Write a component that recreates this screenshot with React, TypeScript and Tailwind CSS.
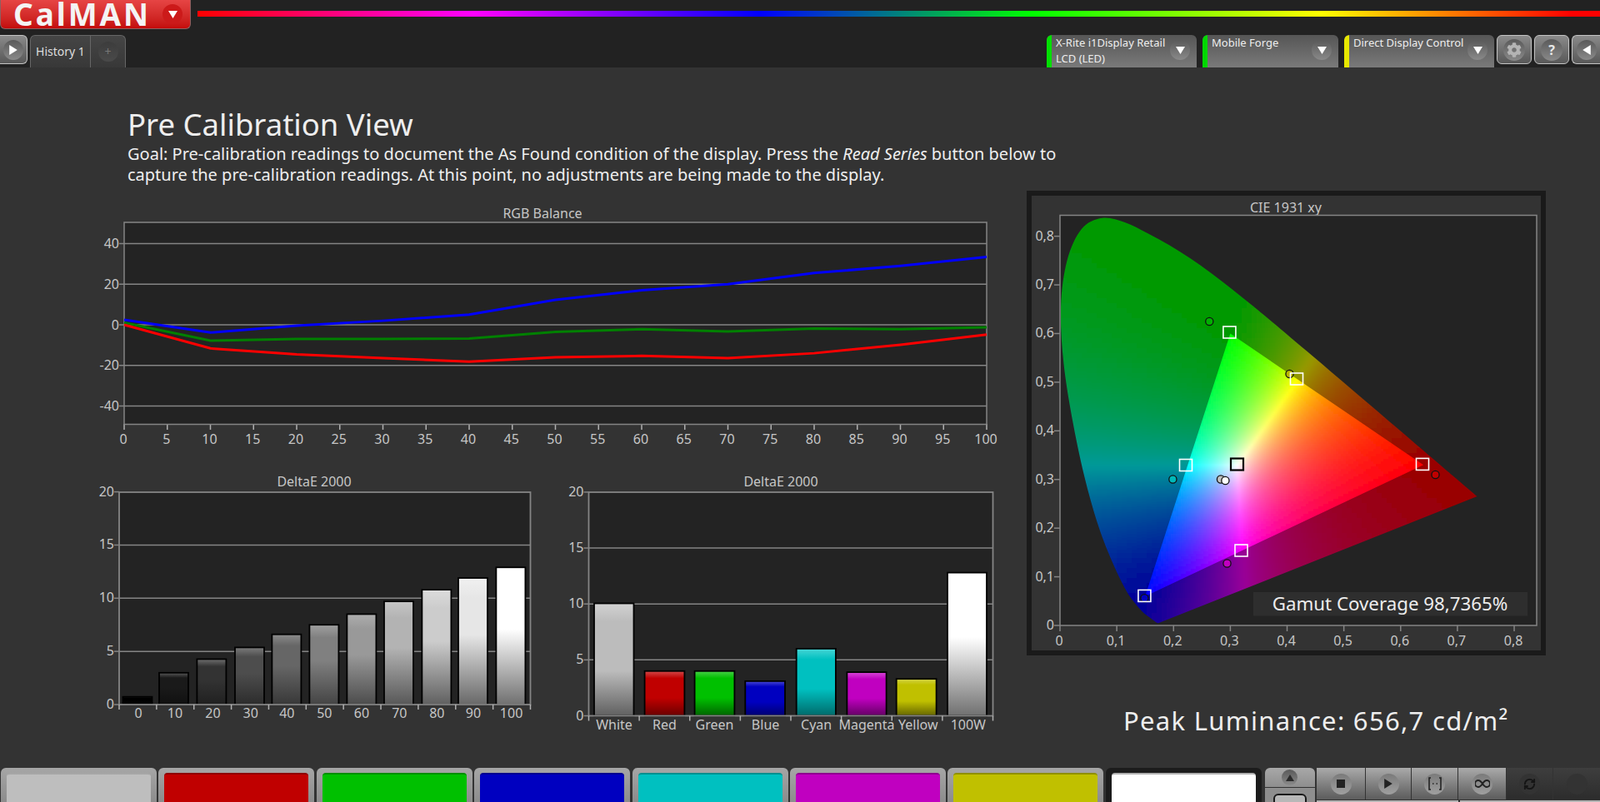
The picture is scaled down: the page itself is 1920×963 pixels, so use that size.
import { useMemo } from "react"
import { FaCog } from "react-icons/fa"
import { RefreshCw } from "lucide-react"

const LABEL = "#c6c6c6"
const AXIS = "#858585"
const PLOT = "#232323"

// spectral locus, CIE 1931 (nudged a little to sit on the reference outline)
const LOCUS = [
  [0.1741, 0.005], [0.1733, 0.0048], [0.1714, 0.0051], [0.1689, 0.0069], [0.1644, 0.0109], [0.1566, 0.0177],
  [0.144, 0.0297], [0.1241, 0.0578], [0.1096, 0.0868], [0.0913, 0.1327], [0.0687, 0.2007], [0.0454, 0.295],
  [0.0235, 0.4127], [0.0065, 0.5384], [0.0015, 0.6548], [0.0125, 0.7502], [0.038, 0.815], [0.0743, 0.8375],
  [0.1142, 0.8285], [0.1547, 0.8059], [0.1929, 0.7816], [0.2296, 0.7543], [0.2658, 0.7243], [0.3016, 0.6923],
  [0.3373, 0.6589], [0.3731, 0.6245], [0.4441, 0.5547], [0.5125, 0.4866], [0.5752, 0.4242], [0.627, 0.3725],
  [0.6658, 0.334], [0.6915, 0.3083], [0.719, 0.2809], [0.7347, 0.2653],
]

const cx = (x: number) => 1272 + 681.3 * x
const cy = (y: number) => 751 - 584.2 * y

// catmull-rom through the locus points, closed by the purple line
function locusPath() {
  const pts = LOCUS.map(([x, y]) => [cx(x), cy(y)])
  let d = `M${pts[0][0]} ${pts[0][1]}`
  for (let i = 0; i < pts.length - 1; i++) {
    const p0 = pts[Math.max(i - 1, 0)]
    const p1 = pts[i]
    const p2 = pts[i + 1]
    const p3 = pts[Math.min(i + 2, pts.length - 1)]
    d += `C${p1[0] + (p2[0] - p0[0]) / 6} ${p1[1] + (p2[1] - p0[1]) / 6} ${p2[0] - (p3[0] - p1[0]) / 6} ${p2[1] - (p3[1] - p1[1]) / 6} ${p2[0]} ${p2[1]}`
  }
  return `${d}Z`
}

// xy to a display colour, normalised to full brightness and scaled by k
function xyColor(x: number, y: number, k: number) {
  const yy = Math.max(y, 0.002)
  const X = x / yy
  const Z = (1 - x - yy) / yy
  const r = Math.max(0, 3.2406 * X - 1.5372 - 0.4986 * Z)
  const g = Math.max(0, -0.9689 * X + 1.8758 + 0.0415 * Z)
  const b = Math.max(0, 0.0557 * X - 0.204 + 1.057 * Z)
  const m = Math.max(r, g, b, 0.001)
  return `rgb(${Math.round((r / m) * k)},${Math.round((g / m) * k)},${Math.round((b / m) * k)})`
}

function cells(x0: number, x1: number, y0: number, y1: number, step: number, k: number, keep: (px: number, py: number) => boolean) {
  const out = []
  for (let px = x0; px < x1; px += step) {
    for (let py = y0; py < y1; py += step) {
      if (!keep(px, py)) continue
      const x = (px + step / 2 - 1272) / 681.3
      const y = (751 - py - step / 2) / 584.2
      out.push(<rect key={`${px}-${py}`} x={px} y={py} width={step + 0.5} height={step + 0.5} fill={xyColor(x, y, k)} />)
    }
  }
  return out
}

function Ticks({ lines }: { lines: [number, number, number, number][] }) {
  return (
    <>
      {lines.map(([a, b, c, d]) => (
        <line key={`${a}-${b}-${c}-${d}`} x1={a} y1={b} x2={c} y2={d} stroke={AXIS} strokeWidth={1.5} />
      ))}
    </>
  )
}

function RgbChart() {
  const ys = (v: number) => 390 - 2.4375 * v
  const xs = (v: number) => 149 + 10.35 * v
  const steps = [0, 10, 20, 30, 40, 50, 60, 70, 80, 90, 100]
  const path = (vals: number[]) => vals.map((v, i) => `${xs(steps[i])},${ys(v)}`).join(" ")
  const red = [0, -11.6, -14.6, -16.4, -18.2, -16, -15.3, -16.4, -14, -9.8, -4.8]
  const green = [1, -7.8, -7, -7, -6.8, -3.5, -2.2, -3.3, -1.8, -2.2, -1.2]
  const blue = [2.5, -3.8, -0.4, 2, 5, 12.3, 17, 20, 25.5, 29, 33.4]
  const xTicks = Array.from({ length: 21 }, (_, i) => i * 5)
  return (
    <svg viewBox="100 248 1110 292" width={1110} height={292} className="block ml-[100px]">
      <text x={651} y={262} textAnchor="middle" fontSize={16} fill={LABEL}>RGB Balance</text>
      <rect x={149} y={267} width={1035} height={242.5} fill={PLOT} />
      {[40, 20, 0, -20, -40].map(v => (
        <g key={v}>
          <line x1={143} x2={1184} y1={ys(v)} y2={ys(v)} stroke={AXIS} strokeWidth={1.5} />
          <text x={143} y={ys(v) + 5.5} textAnchor="end" fontSize={16} fill={LABEL}>{v}</text>
        </g>
      ))}
      {xTicks.map(v => (
        <g key={v}>
          <line x1={xs(v)} x2={xs(v)} y1={509} y2={516} stroke="#b0b0b0" strokeWidth={1.5} />
          <text x={xs(v) - 1} y={532.5} textAnchor="middle" fontSize={16} fill={LABEL}>{v}</text>
        </g>
      ))}
      <rect x={149} y={267} width={1035} height={242.5} fill="none" stroke={AXIS} strokeWidth={1.5} />
      <polyline points={path(green)} fill="none" stroke="#008000" strokeWidth={3} />
      <polyline points={path(blue)} fill="none" stroke="#0000ff" strokeWidth={3} />
      <polyline points={path(red)} fill="none" stroke="#ff0000" strokeWidth={3} />
    </svg>
  )
}

interface Bar {
  label: string
  left: number
  width: number
  value: number
  top: string
  base: string
  low: string
  mid?: number
  labelX: number
}

function BarChart({ id, x0, x1, left, right, bottom, unit, slots, labelY, titleX, bars }: {
  id: string
  x0: number
  x1: number
  left: number
  right: number
  bottom: number
  unit: number
  slots: number
  labelY: number
  titleX: number
  bars: Bar[]
}) {
  const top = 591
  const slot = (right - left) / slots
  return (
    <svg viewBox={`${x0} 565 ${x1 - x0} 315`} width={x1 - x0} height={315} className="block">
      <defs>
        {bars.map((b, i) => (
          <linearGradient key={b.label} id={`${id}${i}`} x1="0" y1="0" x2="0" y2="1">
            <stop offset="0" stopColor={b.top} />
            <stop offset="0.16" stopColor={b.base} />
            <stop offset={b.mid ?? 0.6} stopColor={b.base} />
            <stop offset="1" stopColor={b.low} />
          </linearGradient>
        ))}
      </defs>
      <text x={titleX} y={583.5} textAnchor="middle" fontSize={16} fill={LABEL}>DeltaE 2000</text>
      <rect x={left} y={top} width={right - left} height={bottom - top} fill={PLOT} />
      {[15, 10, 5].map(v => (
        <line key={v} x1={left} x2={right} y1={bottom - v * unit} y2={bottom - v * unit} stroke={AXIS} strokeWidth={1.5} />
      ))}
      {[20, 15, 10, 5, 0].map(v => (
        <g key={v}>
          <line x1={left - 6} x2={left} y1={bottom - v * unit} y2={bottom - v * unit} stroke={AXIS} strokeWidth={1.5} />
          <text x={left - 6} y={bottom - v * unit + 5} textAnchor="end" fontSize={16} fill={LABEL}>{v}</text>
        </g>
      ))}
      {bars.map((b, i) => (
        <rect key={b.label} x={b.left} y={bottom - b.value * unit} width={b.width} height={b.value * unit} fill={`url(#${id}${i})`} stroke="#000" strokeWidth={1.8} />
      ))}
      <rect x={left} y={top} width={right - left} height={bottom - top} fill="none" stroke={AXIS} strokeWidth={1.8} />
      {Array.from({ length: slots + 1 }, (_, i) => (
        <line key={i} x1={left + i * slot} x2={left + i * slot} y1={bottom} y2={bottom + 6} stroke="#b0b0b0" strokeWidth={1.5} />
      ))}
      {bars.map(b => (
        <text key={b.label} x={b.labelX} y={labelY} textAnchor="middle" fontSize={16} fill={LABEL}>{b.label}</text>
      ))}
    </svg>
  )
}

const grayLevels = [
  ["0", 147.5, 0.73, "#2a2a2a", "#000000", "#050505", 166],
  ["10", 191, 2.99, "#585858", "#1a1a1a", "#101010", 210],
  ["20", 236.4, 4.27, "#707070", "#333333", "#202020", 255.4],
  ["30", 282, 5.37, "#7c7c7c", "#4d4d4d", "#2c2c2c", 300.7],
  ["40", 326.4, 6.6, "#8c8c8c", "#666666", "#383838", 344.3],
  ["50", 371.4, 7.5, "#a0a0a0", "#808080", "#444444", 389.3],
  ["60", 416.4, 8.5, "#adadad", "#999999", "#4c4c4c", 434],
  ["70", 461, 9.7, "#c6c6c6", "#b3b3b3", "#585858", 479.3],
  ["80", 506.4, 10.8, "#dcdcdc", "#cccccc", "#606060", 524.3],
  ["90", 550, 11.9, "#f0f0f0", "#e6e6e6", "#686868", 567.9],
  ["100", 595.4, 12.9, "#ffffff", "#ffffff", "#707070", 613.6],
] as const

function GrayChart() {
  const bars = grayLevels.map(([label, left, value, top, base, low, labelX]) => ({
    label, left, width: 35, value, top, base, low, mid: 0.45, labelX,
  }))
  return <BarChart id="gray" x0={100} x1={650} left={143} right={636.5} bottom={846} unit={12.77} slots={11} labelY={862} titleX={377} bars={bars} />
}

function ColorChart() {
  const bars: Bar[] = [
    { label: "White", left: 713, width: 47.5, value: 10.05, top: "#d2d2d2", base: "#bcbcbc", low: "#606060", labelX: 737 },
    { label: "Red", left: 773.6, width: 47.8, value: 4, top: "#d24a4a", base: "#c00000", low: "#6a0000", labelX: 797.5 },
    { label: "Green", left: 833.6, width: 47.8, value: 4, top: "#48d048", base: "#00c000", low: "#006400", labelX: 857.5 },
    { label: "Blue", left: 894.3, width: 47.7, value: 3.1, top: "#4848d2", base: "#0000c0", low: "#000070", labelX: 918.6 },
    { label: "Cyan", left: 955.7, width: 47.2, value: 6, top: "#48d6d6", base: "#00c0c0", low: "#006a6a", labelX: 979.6 },
    { label: "Magenta", left: 1016.4, width: 47.2, value: 3.9, top: "#d648d6", base: "#c000c0", low: "#640064", labelX: 1040 },
    { label: "Yellow", left: 1075.7, width: 47.9, value: 3.3, top: "#d6d648", base: "#c0c000", low: "#646400", labelX: 1101.8 },
    { label: "100W", left: 1137, width: 47, value: 12.8, top: "#ffffff", base: "#ffffff", low: "#707070", mid: 0.45, labelX: 1161.8 },
  ]
  return <BarChart id="color" x0={660} x1={1210} left={706.5} right={1191.5} bottom={859.5} unit={13.43} slots={8} labelY={876} titleX={937} bars={bars} />
}

const TARGETS = [
  { x: 1475.4, y: 399 }, { x: 1556, y: 455 }, { x: 1707, y: 557.4 }, { x: 1423, y: 558.5 }, { x: 1489.5, y: 661 }, { x: 1373.4, y: 715.4 },
]
const READINGS = [
  { x: 1451.3, y: 386, c: "#00b000" }, { x: 1547.5, y: 449, c: "#b8b800" }, { x: 1722.5, y: 570, c: "#c00000" },
  { x: 1407.4, y: 575.5, c: "#00b8b8" }, { x: 1373.4, y: 718.3, c: "#0000c0" }, { x: 1472.5, y: 676.5, c: "#c000c0" },
  { x: 1465, y: 575.5, c: "#c0c0c0" }, { x: 1470.4, y: 577, c: "#ffffff" },
]

function CieChart() {
  const gamut = [[0.64, 0.33], [0.3, 0.6], [0.15, 0.06]].map(([x, y]) => [cx(x), cy(y)])
  const gamutPts = gamut.map(p => p.join(",")).join(" ")

  const { outer, inner } = useMemo(() => {
    const side = (a: number[], b: number[], x: number, y: number) => (b[0] - a[0]) * (y - a[1]) - (b[1] - a[1]) * (x - a[0])
    const near = (x: number, y: number) => {
      const m = 2500
      return side(gamut[0], gamut[1], x, y) < m && side(gamut[1], gamut[2], x, y) < m && side(gamut[2], gamut[0], x, y) < m
    }
    return {
      outer: cells(1262, 1790, 256, 760, 6, 153, () => true),
      inner: cells(1366, 1716, 392, 724, 3, 255, near),
    }
  }, [])

  const vals = [0, 1, 2, 3, 4, 5, 6, 7, 8]
  return (
    <svg viewBox="1238 235 611 546" width={611} height={546} className="block">
      <defs>
        <clipPath id="locus"><path d={locusPath()} /></clipPath>
        <clipPath id="gamut"><polygon points={gamutPts} /></clipPath>
        <filter id="soft" x="-5%" y="-5%" width="110%" height="110%"><feGaussianBlur stdDeviation="3" /></filter>
        <filter id="softer" x="-5%" y="-5%" width="110%" height="110%"><feGaussianBlur stdDeviation="1.2" /></filter>
      </defs>
      <text x={1543} y={254.5} textAnchor="middle" fontSize={16} fill={LABEL}>CIE 1931 xy</text>
      <rect x={1272} y={258.5} width={572} height={492.5} fill={PLOT} />
      <g clipPath="url(#locus)"><g filter="url(#soft)">{outer}</g></g>
      <g clipPath="url(#gamut)"><g filter="url(#softer)">{inner}</g></g>
      <rect x={1272} y={258.5} width={572} height={492.5} fill="none" stroke={AXIS} strokeWidth={1.5} />
      <Ticks lines={vals.map(i => [1265, cy(i / 10), 1272, cy(i / 10)] as [number, number, number, number])} />
      <Ticks lines={vals.map(i => [cx(i / 10), 751, cx(i / 10), 758] as [number, number, number, number])} />
      {vals.map(i => (
        <g key={i}>
          <text x={1265} y={cy(i / 10) + 5} textAnchor="end" fontSize={16} fill={LABEL}>{i === 0 ? "0" : `0,${i}`}</text>
          <text x={cx(i / 10) - 1} y={774.5} textAnchor="middle" fontSize={16} fill={LABEL}>{i === 0 ? "0" : `0,${i}`}</text>
        </g>
      ))}
      {READINGS.map(r => (
        <circle key={`${r.x}`} cx={r.x} cy={r.y} r={4.6} fill={r.c} stroke="#111" strokeWidth={1.3} />
      ))}
      {TARGETS.map(t => (
        <rect key={t.x} x={t.x - 7.5} y={t.y - 7} width={15} height={14} fill="none" stroke="#fff" strokeWidth={1.6} />
      ))}
      <rect x={1477} y={550.5} width={15} height={14} fill="none" stroke="#000" strokeWidth={2.2} />
      <rect x={1504} y={711} width={329} height={28.5} fill="#2e2e2e" />
      <text x={1668} y={732.5} textAnchor="middle" fontSize={22.3} fill="#ececec">Gamut Coverage 98,7365%</text>
    </svg>
  )
}

function Orb({ size = 26, dark = false, children }: { size?: number; dark?: boolean; children?: React.ReactNode }) {
  return (
    <div
      className={`flex items-center justify-center rounded-full shrink-0 ${dark ? "bg-gradient-to-b from-[#3c3c3c] to-[#4a4a4a]" : "bg-gradient-to-b from-[#5a5a5a] to-[#8a8a8a]"}`}
      style={{ width: size, height: size }}
    >
      {children}
    </div>
  )
}

function Tri({ dir, size = 10, color = "#fff" }: { dir: "up" | "down" | "left" | "right"; size?: number; color?: string }) {
  const pts = { up: "0,9 5,1 10,9", down: "0,1 10,1 5,9", left: "9,0 9,10 1,5", right: "1,0 1,10 9,5" }[dir]
  return (
    <svg width={size} height={size} viewBox="0 0 10 10"><polygon points={pts} fill={color} /></svg>
  )
}

function Dropdown({ color, lines, className }: { color: string; lines: string[]; className: string }) {
  return (
    <div className={`relative flex h-[39px] rounded-t-md overflow-hidden bg-gradient-to-b from-[#565656] to-[#7a7a7a] pl-[11px] text-[13px] leading-[19px] text-[#eeeeee] ${className}`}>
      <div className="absolute left-0 top-0 bottom-0 w-[6px] rounded-tl-md" style={{ background: color }} />
      <div className="flex-1 whitespace-nowrap">
        {lines.map(l => <div key={l}>{l}</div>)}
      </div>
      <div className="mr-[8px] mt-[6px]">
        <Orb size={24}><Tri dir="down" size={11} /></Orb>
      </div>
    </div>
  )
}

function SquareBtn({ children, className }: { children: React.ReactNode; className: string }) {
  return (
    <div className={`flex items-center justify-center h-[35px] rounded-md border border-[#c4c4c4] bg-gradient-to-b from-[#8a8a8a] to-[#585858] ${className}`}>
      {children}
    </div>
  )
}

function Header() {
  return (
    <header className="h-[81px] bg-[#222222] shrink-0">
      <div className="flex h-[42px]">
        <div className="flex items-center justify-between w-[229px] h-[35px] pl-[15px] pr-[9px] rounded-b-md border border-t-0 border-[#8c6060] bg-gradient-to-b from-[#e64444] to-[#c40a0a]">
          <span className="-mt-[2px] font-['Liberation_Sans',sans-serif] font-bold text-[37px] leading-[31px] tracking-[2.9px] text-[#f4f4f4]">CalMAN</span>
          <div className="flex items-center justify-center w-[24px] h-[24px] rounded-full bg-[#cc1a1a]">
            <Tri dir="down" size={11} />
          </div>
        </div>
        <div className="flex-1 h-[7px] mt-[13px] ml-[8px] bg-[linear-gradient(to_right,#ff0000_0%,#ff00ff_19.7%,#0000ff_40.1%,#00ff00_59.5%,#ffff00_80.1%,#ff0000_98%)]" />
      </div>
      <div className="flex h-[39px]">
        <SquareBtn className="w-[33px] rounded-l-none border-l-0">
          <Orb size={24}><Tri dir="right" size={12} /></Orb>
        </SquareBtn>
        <div className="flex ml-[3px] w-[115px] rounded-t-md border border-b-0 border-[#666666] bg-gradient-to-b from-[#454545] to-[#383838] text-[14px]">
          <div className="flex items-center justify-center w-[72px] pb-[2px] text-[#dddddd] border-r border-[#666666]">History 1</div>
          <div className="flex flex-1 items-center justify-center">
            <Orb size={24} dark><span className="text-[14px] leading-none text-[#777777]">+</span></Orb>
          </div>
        </div>
        <Dropdown color="#00e000" lines={["X-Rite i1Display Retail", "LCD (LED)"]} className="ml-auto w-[180px]" />
        <Dropdown color="#00d800" lines={["Mobile Forge"]} className="ml-[7px] w-[163px]" />
        <Dropdown color="#e8e800" lines={["Direct Display Control"]} className="ml-[7px] w-[180px]" />
        <SquareBtn className="ml-[3px] w-[42px]"><Orb size={26}><FaCog size={18} color="#b4b4b4" /></Orb></SquareBtn>
        <SquareBtn className="ml-[3px] w-[42px]"><Orb size={26}><span className="font-['Liberation_Sans',sans-serif] font-bold text-[16px] text-[#e8e8e8]">?</span></Orb></SquareBtn>
        <SquareBtn className="ml-[3px] w-[34px] rounded-r-none border-r-0"><Orb size={24}><Tri dir="left" size={12} /></Orb></SquareBtn>
      </div>
    </header>
  )
}

function Swatch({ color, edge, selected }: { color: string; edge: string; selected?: boolean }) {
  return (
    <div className={`w-[187px] h-[41px] rounded-t-md px-[7px] pt-[6px] shrink-0 ${selected ? "bg-[#1c1c1c]" : "bg-gradient-to-b from-[#a6a6a6] to-[#8c8c8c]"}`}>
      <div className={`h-full rounded-t-[4px] border-t-2 ${color} ${edge}`} />
    </div>
  )
}

function TransportCell({ dark, children, className }: { dark?: boolean; children?: React.ReactNode; className: string }) {
  return (
    <div className={`flex items-center justify-center h-[38px] border-r border-[#333333] ${dark ? "bg-gradient-to-b from-[#3e3e3e] to-[#2c2c2c]" : "bg-gradient-to-b from-[#aaaaaa] to-[#5c5c5c]"} ${className}`}>
      <div className={`flex items-center justify-center w-[25px] h-[25px] rounded-full ${dark ? "bg-[#333333]" : "bg-gradient-to-b from-[#7a7a7a] to-[#a0a0a0]"}`}>
        {children}
      </div>
    </div>
  )
}

function BottomBar() {
  return (
    <footer className="flex h-[41px] pl-[1px] gap-[2.4px] overflow-hidden shrink-0">
      <Swatch color="bg-[#bebebe]" edge="border-[#a6a6a6]" />
      <Swatch color="bg-[#c00000]" edge="border-[#900000]" />
      <Swatch color="bg-[#00c000]" edge="border-[#009000]" />
      <Swatch color="bg-[#0000c0]" edge="border-[#000090]" />
      <Swatch color="bg-[#00c0c0]" edge="border-[#009090]" />
      <Swatch color="bg-[#c000c0]" edge="border-[#900090]" />
      <Swatch color="bg-[#c0c000]" edge="border-[#909000]" />
      <Swatch color="bg-[#ffffff]" edge="border-[#b0b0b0]" selected />
      <div className="w-[60px] ml-[1.5px] shrink-0">
        <div className="flex items-center justify-center h-[23px] rounded-t-md bg-gradient-to-b from-[#a8a8a8] to-[#8e8e8e]">
          <Orb size={19}><Tri dir="up" size={10} color="#2a2a2a" /></Orb>
        </div>
        <div className="h-[18px] mt-[1px] px-[10px] pt-[7px] bg-[#8e8e8e]">
          <div className="h-[20px] rounded-t-md border-2 border-[#1a1a1a] bg-[#b8b8b8]" />
        </div>
      </div>
      <div className="flex-1">
        <div className="flex">
          <TransportCell className="w-[59px]">
            <div className="w-[10px] h-[10px] bg-[#222222]" />
          </TransportCell>
          <TransportCell className="w-[55px]"><Tri dir="right" size={12} color="#222222" /></TransportCell>
          <TransportCell className="w-[56px]">
            <svg width="18" height="16" viewBox="0 0 18 16" fill="none" stroke="#222222" strokeWidth="1.6">
              <path d="M4 1H2v14h2M14 1h2v14h-2" />
              <path d="M6 8h1.5M10.5 8H12" />
            </svg>
          </TransportCell>
          <TransportCell className="w-[58px]">
            <svg width="18" height="10" viewBox="0 0 18 10" fill="none" stroke="#222222" strokeWidth="2">
              <path d="M9 5C7 2 5.5 1 4 1a4 4 0 0 0 0 8c1.5 0 3-1 5-4s3.5-4 5-4a4 4 0 0 1 0 8c-1.5 0-3-1-5-4z" />
            </svg>
          </TransportCell>
          <TransportCell dark className="w-[56px]">
            <RefreshCw size={15} strokeWidth={3} color="#151515" />
          </TransportCell>
          <TransportCell dark className="flex-1 border-r-0" />
        </div>
        <div className="flex h-[3px] mt-[1px]">
          <div className="w-[170px] bg-[#b4b4b4]" />
          <div className="flex-1 ml-[2px] bg-[#b4b4b4]" />
        </div>
      </div>
    </footer>
  )
}

export default function App() {
  return (
    <div className="flex flex-col w-[1920px] h-[963px] overflow-hidden bg-[#333333] font-['Open_Sans',sans-serif]">
      <Header />
      <main className="flex flex-1 min-h-0">
        <section className="w-[1232px] shrink-0">
          <div className="pl-[153px] pt-[46px] text-[#eeeeee]">
            <h1 className="text-[36.5px] leading-[45px] font-normal">Pre Calibration View</h1>
            <p className="w-max text-[20px] leading-[25px] text-[#eeeeee] whitespace-nowrap">
              Goal: Pre-calibration readings to document the As Found condition of the display. Press the <i>Read Series</i> button below to<br />
              capture the pre-calibration readings. At this point, no adjustments are being made to the display.
            </p>
          </div>
          <div className="mt-[26px]">
            <RgbChart />
          </div>
          <div className="flex mt-[25px] ml-[100px] gap-[10px]">
            <GrayChart />
            <ColorChart />
          </div>
        </section>
        <section className="flex-1">
          <div className="mt-[148px] w-[623px] h-[558px] border-[6px] border-[#1a1a1a] bg-[#333333]">
            <CieChart />
          </div>
          <div className="mt-[59px] ml-[116px] text-[31px] leading-[38px] tracking-[1.3px] text-[#eeeeee] whitespace-nowrap">
            Peak Luminance: 656,7 cd/m²
          </div>
        </section>
      </main>
      <BottomBar />
    </div>
  )
}
